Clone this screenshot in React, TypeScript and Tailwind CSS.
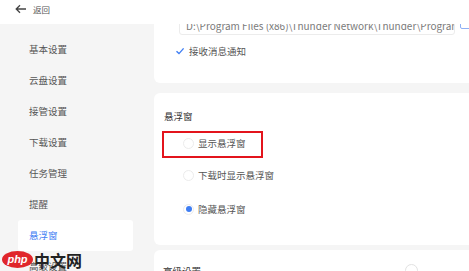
const menu = ["基本设置", "云盘设置", "接管设置", "下载设置", "任务管理", "提醒", "悬浮窗", "高级设置"];

function Radio({ checked, label }: { checked?: boolean; label: string }) {
  return (
    <div className="flex items-center h-[12px]">
      <span className="w-[11px] h-[11px] rounded-full border border-[#ececec] flex items-center justify-center">
        {checked && <span className="w-[6px] h-[6px] rounded-full bg-[#3f7ef3]" />}
      </span>
      <span className="ml-[4px]">{label}</span>
    </div>
  );
}

export default function App() {
  return (
    <div
      className="relative w-[469px] h-[271px] overflow-hidden bg-white flex flex-col text-[9.5px] text-[#555]"
      style={{ fontFamily: '"Noto Sans CJK SC", "Noto Sans", sans-serif' }}
    >
      <div className="h-[24px] shrink-0 flex items-start pt-[3px] pl-[15px] gap-[6px] bg-white">
        <svg width="12" height="10" viewBox="0 0 12 10" fill="none" stroke="#444" strokeWidth="1.3" className="mt-[1px]">
          <path d="M11 5H1.5M5 1.2L1.2 5L5 8.8" />
        </svg>
        <span className="text-[8.5px] leading-[12px] text-[#555]">返回</span>
      </div>

      <div className="flex flex-1 min-h-0">
        <div className="w-[154px] shrink-0 bg-[#f5f5f5] pt-[10px] pl-[18px]">
          {menu.map((m) => (
            <div
              key={m}
              className={
                "h-[31px] w-[115px] flex items-center pl-[11px] rounded-[3px] " +
                (m === "悬浮窗" ? "bg-white text-[#3f7ef3]" : "text-[#555]")
              }
            >
              {m}
            </div>
          ))}
        </div>

        <div className="flex-1 min-w-0 bg-[#f5f5f5] overflow-hidden">
          <div className="w-[340px] h-[69px] mt-[-10px] bg-white rounded-bl-[6px] pl-[21px]">
            <div className="flex items-end">
              <div className="ml-[4px] w-[276px] h-[21px] border border-[#ececec] rounded-[3px] pl-[6px] pt-[5px] overflow-hidden whitespace-nowrap text-[#7a7a7a] text-[10px] leading-[12px]">
                D:\Program Files (x86)\Thunder Network\Thunder\Program
              </div>
              <div className="ml-[5px] mb-[6px] w-[14px] h-[10px] border border-[#8fb0f5] rounded-[2px]" />
            </div>
            <div className="flex items-center mt-[10px] h-[12px]">
              <svg width="10" height="10" viewBox="0 0 10 10" fill="none" stroke="#3f7ef3" strokeWidth="1.4">
                <path d="M1.5 5.2L4 7.6L8.6 2.4" />
              </svg>
              <span className="ml-[4px]">接收消息通知</span>
            </div>
          </div>

          <div className="relative w-[340px] h-[152px] mt-[10px] bg-white rounded-l-[6px] pt-[17px]">
            <div className="pl-[10px] h-[12px] flex items-center text-[#333]">悬浮窗</div>
            <div className="pl-[29px] mt-[15px] flex flex-col gap-[21px]">
              <Radio label="显示悬浮窗" />
              <div className="-mt-[1px]">
                <Radio label="下载时显示悬浮窗" />
              </div>
              <div className="mt-[1px]">
                <Radio checked label="隐藏悬浮窗" />
              </div>
            </div>
            <div className="absolute left-[8px] top-[38px] w-[101px] h-[27px] border-[2.5px] border-[#e3141c]" />
          </div>

          <div className="w-[340px] h-[40px] mt-[5px] bg-white rounded-l-[6px] pl-[9px] pt-[14px] flex justify-between">
            <span className="text-[#333]">高级设置</span>
            <span className="mr-[76px] w-[13px] h-[13px] rounded-full border border-[#e2e2e2]" />
          </div>
        </div>
      </div>

      <div className="absolute left-[2px] top-[251px] flex items-center">
        <span className="w-[31px] h-[17px] rounded-[50%] bg-[#e0262b] text-white italic font-bold text-[11px] leading-none flex items-center justify-center" style={{ fontFamily: '"Liberation Sans", sans-serif' }}>
          php
        </span>
        <span className="ml-[1px] text-[16px] leading-none font-bold text-[#222]">中文网</span>
      </div>
    </div>
  );
}
